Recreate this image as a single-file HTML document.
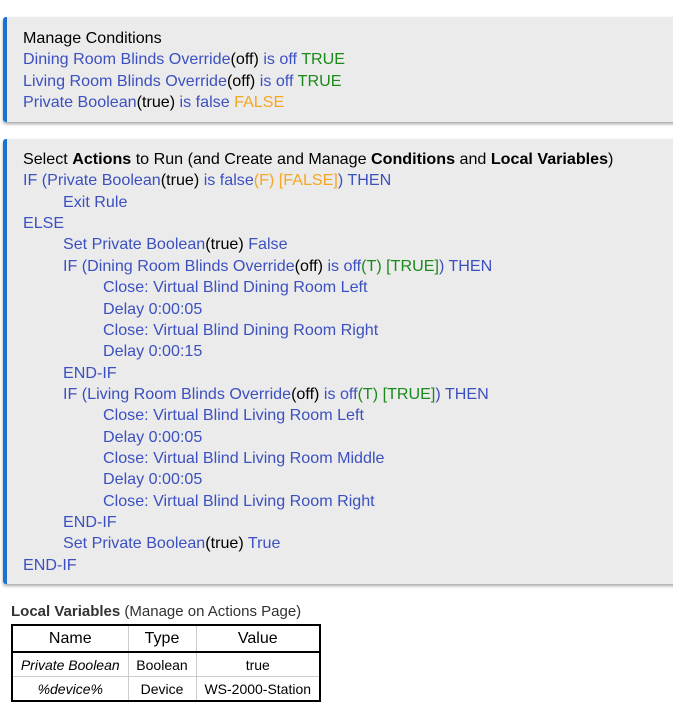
<!DOCTYPE html>
<html><head><style>
body{margin:0;background:#fff;font-family:"Liberation Sans",sans-serif;font-size:16.1px;width:673px;height:709px;overflow:hidden;position:relative}
.box{position:absolute;left:3px;width:690px;background:#ebebeb;border-left:4px solid #1a73d0;border-radius:3px;box-shadow:0 2px 3px rgba(0,0,0,.35);box-sizing:border-box;padding-left:16px}
.l{height:21.37px;line-height:21.37px;white-space:nowrap;color:#3c50c0}
.k{color:#000}.g{color:#1a8a1a}.o{color:#f5a623}.h{color:#000}
.i1{padding-left:40px}.i2{padding-left:80px}
table{position:absolute;left:11px;top:624px;border-collapse:collapse;border:2px solid #000;font-size:14px;table-layout:fixed;width:310px}
td,th{border:1px solid #ccc;text-align:center;padding:0;height:23px;white-space:nowrap;overflow:hidden}
th{font-weight:normal;font-size:16px;height:25px;border-bottom:2px solid #000}
</style></head><body>
<div class="box" style="top:17px;height:105px;padding-top:11px">
<div class="l h">Manage Conditions</div>
<div class="l">Dining Room Blinds Override<span class="k">(off)</span> is off <span class="g">TRUE</span></div>
<div class="l">Living Room Blinds Override<span class="k">(off)</span> is off <span class="g">TRUE</span></div>
<div class="l">Private Boolean<span class="k">(true)</span> is false <span class="o">FALSE</span></div>
</div>
<div class="box" style="top:139px;height:445px;padding-top:10px">
<div class="l h">Select <b>Actions</b> to Run (and Create and Manage <b>Conditions</b> and <b>Local Variables</b>)</div>
<div class="l">IF (Private Boolean<span class="k">(true)</span> is false<span class="o">(F) [FALSE]</span>) THEN</div>
<div class="l i1">Exit Rule</div>
<div class="l">ELSE</div>
<div class="l i1">Set Private Boolean<span class="k">(true)</span> False</div>
<div class="l i1">IF (Dining Room Blinds Override<span class="k">(off)</span> is off<span class="g">(T) [TRUE]</span>) THEN</div>
<div class="l i2">Close: Virtual Blind Dining Room Left</div>
<div class="l i2">Delay 0:00:05</div>
<div class="l i2">Close: Virtual Blind Dining Room Right</div>
<div class="l i2">Delay 0:00:15</div>
<div class="l i1">END-IF</div>
<div class="l i1">IF (Living Room Blinds Override<span class="k">(off)</span> is off<span class="g">(T) [TRUE]</span>) THEN</div>
<div class="l i2">Close: Virtual Blind Living Room Left</div>
<div class="l i2">Delay 0:00:05</div>
<div class="l i2">Close: Virtual Blind Living Room Middle</div>
<div class="l i2">Delay 0:00:05</div>
<div class="l i2">Close: Virtual Blind Living Room Right</div>
<div class="l i1">END-IF</div>
<div class="l i1">Set Private Boolean<span class="k">(true)</span> True</div>
<div class="l">END-IF</div>
</div>
<div style="position:absolute;left:11px;top:603px;font-size:15px;color:#333"><b>Local Variables</b> (Manage on Actions Page)</div>
<table>
<colgroup><col style="width:116px"><col style="width:68px"><col style="width:124px"></colgroup>
<tr><th>Name</th><th>Type</th><th>Value</th></tr>
<tr><td><i>Private Boolean</i></td><td>Boolean</td><td>true</td></tr>
<tr><td><i>%device%</i></td><td>Device</td><td>WS-2000-Station</td></tr>
</table>
</body></html>
